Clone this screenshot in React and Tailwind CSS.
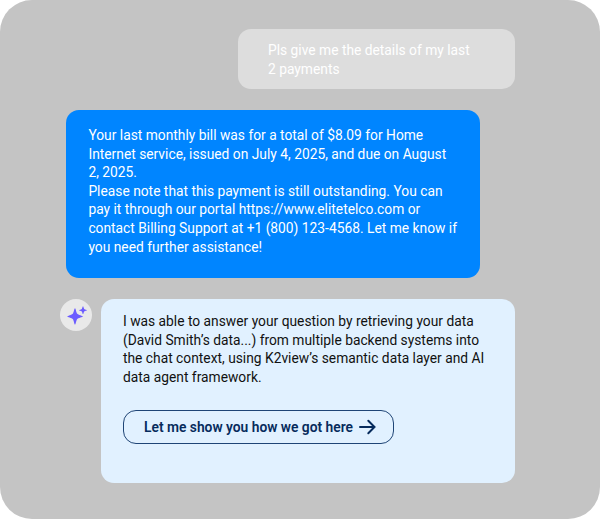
import React from 'react';

const billLines = [
  'Your last monthly bill was for a total of $8.09 for Home',
  'Internet service, issued on July 4, 2025, and due on August',
  '2, 2025.',
  'Please note that this payment is still outstanding. You can',
  'pay it through our portal https://www.elitetelco.com or',
  'contact Billing Support at +1 (800) 123-4568. Let me know if',
  'you need further assistance!',
];

const contextLines = [
  'I was able to answer your question by retrieving your data',
  '(David Smith’s data...) from multiple backend systems into',
  'the chat context, using K2view’s semantic data layer and AI',
  'data agent framework.',
];

const Lines = ({ lines }) =>
  lines.map((line) => (
    <p key={line} className="whitespace-nowrap">
      {line}
    </p>
  ));

const Sparkles = () => (
  <svg width="32" height="32" viewBox="0 0 32 32" fill="#6c5cff">
    <path d="M15 9.300C15.700 9.300 15.900 12.200 17 14.500C18.200 16.300 22.900 16.700 22.900 17.500C22.900 18.300 18.200 18.700 17 20.200C15.900 22.500 15.700 25.500 15 25.500C14.300 25.500 14.100 22.500 13 20.200C11.800 18.700 7.300 18.300 7.300 17.500C7.300 16.700 11.800 16.300 13 14.500C14.100 12.200 14.300 9.300 15 9.300Z" />
    <path d="M23 7.300C23.400 7.300 23.600 9 24.200 10C25 10.700 27 10.800 27 11.200C27 11.600 25 11.700 24.200 12.400C23.600 13.400 23.400 15.100 23 15.100C22.600 15.100 22.400 13.400 21.800 12.400C21 11.700 19 11.600 19 11.200C19 10.800 21 10.700 21.800 10C22.400 9 22.600 7.300 23 7.300Z" />
  </svg>
);

const App = () => {
  return (
    <div className="w-[600px] h-[519px] rounded-[32px] bg-[#c4c4c4] pt-[29px] font-['Roboto',sans-serif] text-[13.8px] leading-[18.6px]">
      <div className="ml-[237.5px] w-[277.5px] h-[59.5px] rounded-[13px] bg-[#dddddd] pl-[30.5px] pt-[12px] text-white">
        <Lines lines={['Pls give me the details of my last', '2 payments']} />
      </div>

      <div className="mt-[21.5px] ml-[66.4px] w-[414px] h-[168px] rounded-[13px] bg-[#0085ff] pl-[22px] pt-[16px] text-white">
        <Lines lines={billLines} />
      </div>

      <div className="mt-[21px] ml-[60px] flex items-start gap-[9px]">
        <div className="w-8 h-8 rounded-full bg-[#e9e9e9] flex items-center justify-center">
          <Sparkles />
        </div>
        <div className="w-[414px] h-[184px] rounded-[13px] bg-[#e1f1ff] pl-[22px] pt-[13px] text-[#111]">
          <Lines lines={contextLines} />
          <button className="mt-[24px] w-[271px] h-[34px] rounded-[13px] border border-[#1f4576] flex items-center pl-5 gap-[6px] font-semibold text-[#062b5c]">
            Let me show you how we got here
            <svg width="18" height="16" viewBox="0 0 18 16" fill="none" stroke="#062b5c" strokeWidth="2" strokeLinecap="round">
              <path d="M1 8H15.500M9.300 1.800L15.500 8L9.300 14.200" />
            </svg>
          </button>
        </div>
      </div>
    </div>
  );
};

export default App;
